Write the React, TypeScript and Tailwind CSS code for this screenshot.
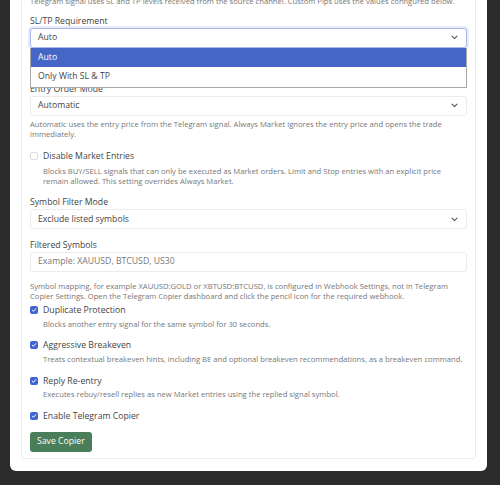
import type { ReactNode } from 'react';

function Chevron() {
  return (
    <svg width="7" height="5" viewBox="0 0 7 5" className="shrink-0">
      <path d="M1 1.2 L3.5 3.6 L6 1.2" fill="none" stroke="#555" strokeWidth="1.1" strokeLinecap="round" strokeLinejoin="round" />
    </svg>
  );
}

function Label({ children }: { children: ReactNode }) {
  return <div className="mb-px text-[8.7px] leading-[11px] text-[#444]">{children}</div>;
}

function Hint({ children, className = '' }: { children: ReactNode; className?: string }) {
  return <p className={`text-[7.65px] leading-[10.5px] text-[#777] ${className}`}>{children}</p>;
}

function Select({ value, focused = false }: { value: string; focused?: boolean }) {
  return (
    <div
      className={`flex h-5 items-center justify-between rounded-[3px] border bg-white pl-[7px] pr-[8px] text-[8.7px] text-[#444] ${
        focused ? 'border-[#a9b8ea] shadow-[0_0_0_2px_rgba(68,102,198,0.12)]' : 'border-[#ebebeb]'
      }`}
    >
      <span>{value}</span>
      <Chevron />
    </div>
  );
}

function CheckRow({ label, checked, className = '' }: { label: string; checked: boolean; className?: string }) {
  return (
    <div className={`flex h-3 items-center gap-[5px] ${className}`}>
      {checked ? (
        <span className="flex h-2 w-2 items-center justify-center rounded-[2px] bg-[#4064d2]">
          <svg width="6" height="6" viewBox="0 0 6 6">
            <path d="M1.2 3.1 L2.5 4.3 L4.8 1.7" fill="none" stroke="#fff" strokeWidth="1" strokeLinecap="round" strokeLinejoin="round" />
          </svg>
        </span>
      ) : (
        <span className="h-2 w-2 rounded-[2px] border border-[#dcdcdc] bg-white" />
      )}
      <span className="text-[8.7px] leading-[12px] text-[#444]">{label}</span>
    </div>
  );
}

export default function App() {
  return (
    <div className="min-h-[485px] overflow-hidden bg-[#2b2b2b] pl-[10px] pr-[13px] font-['Open_Sans',sans-serif]">
      <div className="rounded-b-[6px] bg-white px-[11px] pb-[12px]">
        <div className="rounded-b-[4px] border border-t-0 border-[#ececec] px-[8px] pb-[6px]">
          <Hint className="-mt-[4.25px]">
            Telegram signal uses SL and TP levels received from the source channel. Custom Pips uses the values configured below.
          </Hint>

          {/* SL/TP select, opened */}
          <div className="relative mt-[9.25px]">
            <Label>SL/TP Requirement</Label>
            <Select value="Auto" focused />
            <div className="absolute left-0 right-0 top-[32px] z-10 border border-t-0 border-[#a8a8a8] bg-white text-[8.7px]">
              <div className="flex h-[19.5px] items-center bg-[#4566c6] pl-[7px] text-white">Auto</div>
              <div className="flex h-[19.5px] items-center pl-[7px] text-[#444]">Only With SL &amp; TP</div>
            </div>
          </div>

          <div className="mt-[36px]">
            <Label>Entry Order Mode</Label>
            <Select value="Automatic" />
            <Hint className="mt-[3.25px]">
              Automatic uses the entry price from the Telegram signal. Always Market ignores the entry price and opens the trade immediately.
            </Hint>
          </div>

          <CheckRow label="Disable Market Entries" checked={false} className="mt-[10px]" />
          <Hint className="mt-[4px] pl-[13px]">
            Blocks BUY/SELL signals that can only be executed as Market orders. Limit and Stop entries with an explicit price remain allowed. This setting overrides Always Market.
          </Hint>

          <div className="mt-[10.5px]">
            <Label>Symbol Filter Mode</Label>
            <Select value="Exclude listed symbols" />
          </div>

          <div className="mt-[10.25px]">
            <Label>Filtered Symbols</Label>
            <div className="flex h-5 items-center rounded-[3px] border border-[#ebebeb] pl-[7px] text-[8.7px] text-[#777]">
              Example: XAUUSD, BTCUSD, US30
            </div>
          </div>

          <Hint className="mt-[9.25px]">
            Symbol mapping, for example XAUUSD:GOLD or XBTUSD:BTCUSD, is configured in Webhook Settings, not in Telegram Copier Settings. Open the Telegram Copier dashboard and click the pencil icon for the required webhook.
          </Hint>

          <CheckRow label="Duplicate Protection" checked className="mt-[2px]" />
          <Hint className="mt-[2.75px] pl-[13px]">Blocks another entry signal for the same symbol for 30 seconds.</Hint>

          <CheckRow label="Aggressive Breakeven" checked className="mt-[10.25px]" />
          <Hint className="mt-[2.75px] pl-[13px]">
            Treats contextual breakeven hints, including BE and optional breakeven recommendations, as a breakeven command.
          </Hint>

          <CheckRow label="Reply Re-entry" checked className="mt-[10.25px]" />
          <Hint className="mt-[2.25px] pl-[13px]">Executes rebuy/resell replies as new Market entries using the replied signal symbol.</Hint>

          <CheckRow label="Enable Telegram Copier" checked className="mt-[10.75px]" />

          <button className="mt-[9.75px] flex h-5 items-center rounded-[3px] bg-[#4a7d5a] px-[7px] text-[8.7px] text-white">
            Save Copier
          </button>
        </div>
      </div>
    </div>
  );
}
